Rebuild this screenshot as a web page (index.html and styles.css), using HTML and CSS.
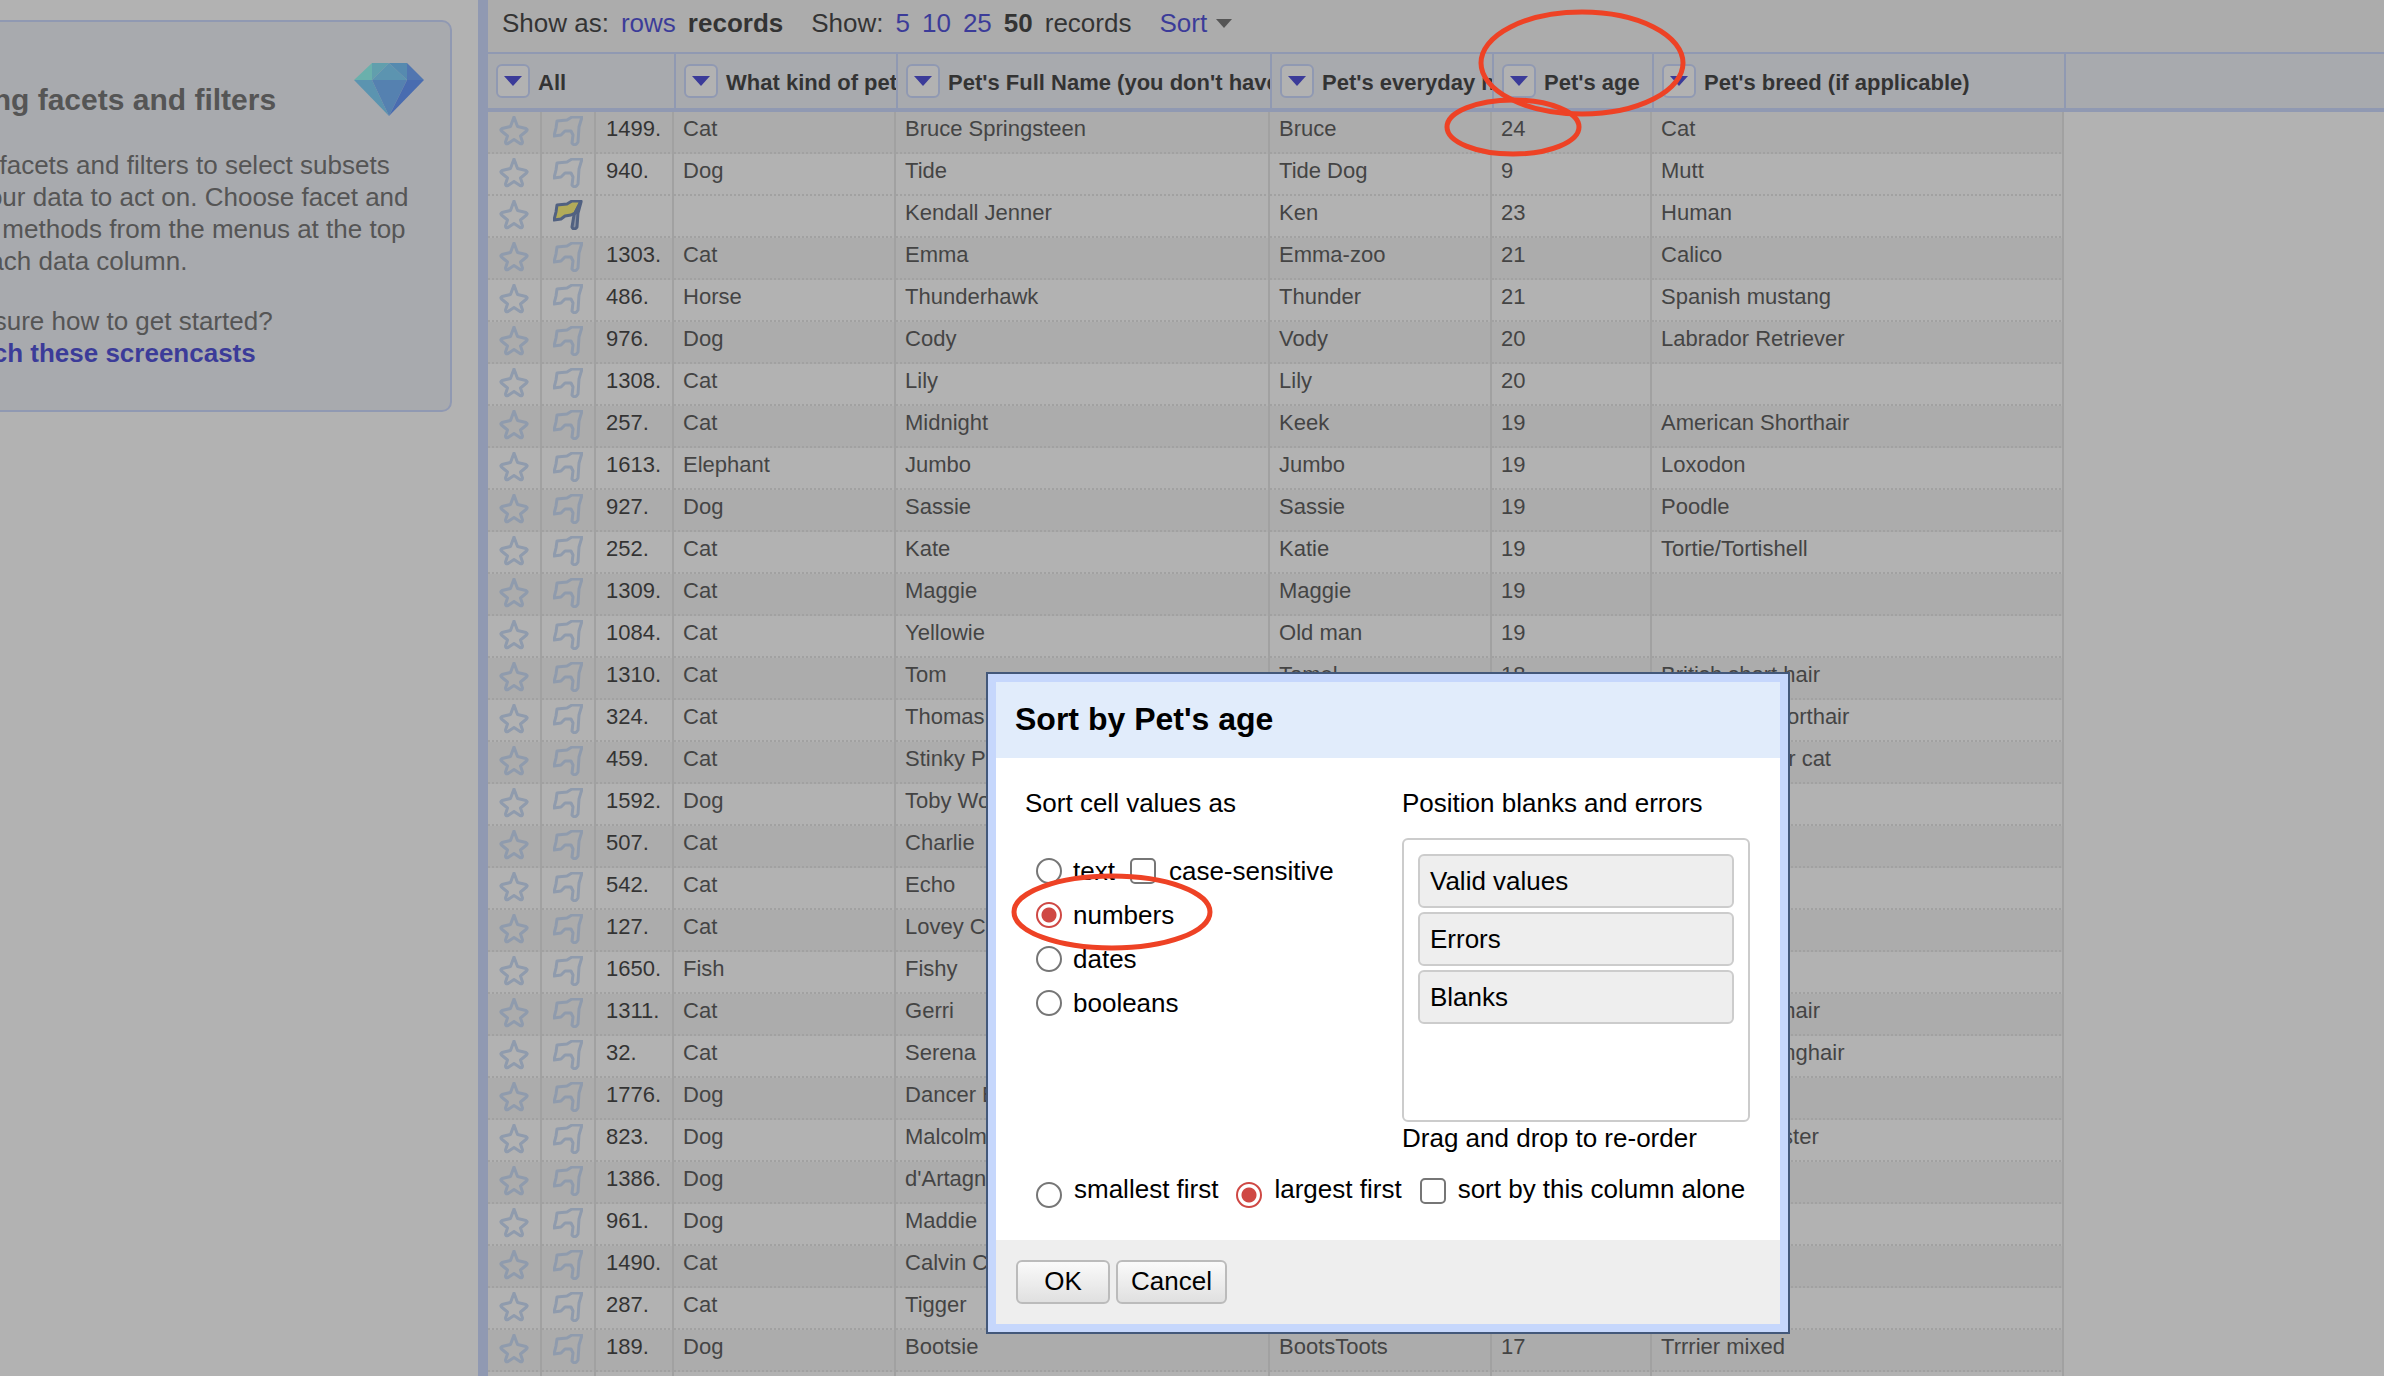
FILE: index.html
```html
<!DOCTYPE html>
<html lang="en">
<head>
<meta charset="utf-8">
<title>Pets - sort records</title>
<link rel="stylesheet" href="styles.css">
</head>
<body>
<svg class="sprite" aria-hidden="true">
  <symbol id="star" viewBox="0 0 30 30"><path d="M15 1L18.500 10.500L27 12.500Q29 13.500 27.500 15L21.500 20L23.500 26Q23.500 28.500 21 27.500L15 23.500L9 27.500Q6.500 28.500 6.500 26L8.500 20L2.500 15Q1 13.500 3 12.500L11.500 10.500Z"/></symbol>
  <symbol id="flag" viewBox="0 0 30 30"><path d="M4 5L14 4L19 1H29L26 11L25 26Q22 31 19 27L20 19L18 15H12L8 19L1 20L3 12Z"/></symbol>
  <symbol id="flag-on" viewBox="0 0 30 30"><path class="cloth" d="M4 5L14 4L19 1H28L22 13L18 15L12 16L8 19L1 20L3 12Z"/><path class="pole" d="M28 2L25 13L24 27Q21 31 19 27L21 15Z"/></symbol>
  <symbol id="down" viewBox="0 0 18 10"><path d="M0 0H18L9 10Z"/></symbol>
</svg>

<div class="app">
  <aside class="facets">
    <div class="help">
      <div class="help-head">
        <h2>Using facets and filters</h2>
        <svg class="gem" viewBox="0 0 70 54" aria-hidden="true">
          <path fill="#6efbf2" d="M18 1L0 18H18Z"/>
          <path fill="#5cd8f4" d="M18 1H35L18 18Z"/>
          <path fill="#52c2fa" d="M35 1L53 18H18Z"/>
          <path fill="#46aef8" d="M35 1H53V18Z"/>
          <path fill="#3c86fa" d="M53 1L70 18H53Z"/>
          <path fill="#50c2fa" d="M0 18H18L35 54Z"/>
          <path fill="#449cfa" d="M18 18H53L35 54Z"/>
          <path fill="#2c72fa" d="M53 18H70L35 54Z"/>
        </svg>
      </div>
      <p>Use facets and filters to select subsets of your data to act on. Choose facet and filter methods from the menus at the top of each data column.</p>
      <p>Not sure how to get started?<br><a href="#">Watch these screencasts</a></p>
    </div>
  </aside>

  <main class="view">
    <nav class="toolbar">
      <div class="group"><span>Show as:</span><a href="#">rows</a><b>records</b></div>
      <div class="group"><span>Show:</span><a href="#">5</a><a href="#">10</a><a href="#">25</a><b>50</b><span>records</span></div>
      <a class="sort" href="#">Sort <svg aria-hidden="true"><use href="#down"/></svg></a>
    </nav>

    <table class="grid">
      <colgroup><col class="c-mark"><col class="c-mark"><col class="c-index"><col class="c-kind"><col class="c-name"><col class="c-nick"><col class="c-age"><col class="c-breed"><col></colgroup>
      <thead>
        <tr>
          <th colspan="3"><div><button aria-label="All menu"><svg><use href="#down"/></svg></button>All</div></th>
          <th><div><button aria-label="Column menu"><svg><use href="#down"/></svg></button>What kind of pet is this?</div></th>
          <th><div><button aria-label="Column menu"><svg><use href="#down"/></svg></button>Pet's Full Name (you don't have to include it)</div></th>
          <th><div><button aria-label="Column menu"><svg><use href="#down"/></svg></button>Pet's everyday name</div></th>
          <th><div><button aria-label="Column menu"><svg><use href="#down"/></svg></button>Pet's age</div></th>
          <th><div><button aria-label="Column menu"><svg><use href="#down"/></svg></button>Pet's breed (if applicable)</div></th>
          <th></th>
        </tr>
      </thead>
      <tbody>
        <tr><td><svg><use href="#star"/></svg></td><td><svg><use href="#flag"/></svg></td><td>1499.</td><td>Cat</td><td>Bruce Springsteen</td><td>Bruce</td><td>24</td><td>Cat</td></tr>
        <tr><td><svg><use href="#star"/></svg></td><td><svg><use href="#flag"/></svg></td><td>940.</td><td>Dog</td><td>Tide</td><td>Tide Dog</td><td>9</td><td>Mutt</td></tr>
        <tr><td><svg><use href="#star"/></svg></td><td><svg class="on"><use href="#flag-on"/></svg></td><td></td><td></td><td>Kendall Jenner</td><td>Ken</td><td>23</td><td>Human</td></tr>
        <tr><td><svg><use href="#star"/></svg></td><td><svg><use href="#flag"/></svg></td><td>1303.</td><td>Cat</td><td>Emma</td><td>Emma-zoo</td><td>21</td><td>Calico</td></tr>
        <tr><td><svg><use href="#star"/></svg></td><td><svg><use href="#flag"/></svg></td><td>486.</td><td>Horse</td><td>Thunderhawk</td><td>Thunder</td><td>21</td><td>Spanish mustang</td></tr>
        <tr><td><svg><use href="#star"/></svg></td><td><svg><use href="#flag"/></svg></td><td>976.</td><td>Dog</td><td>Cody</td><td>Vody</td><td>20</td><td>Labrador Retriever</td></tr>
        <tr><td><svg><use href="#star"/></svg></td><td><svg><use href="#flag"/></svg></td><td>1308.</td><td>Cat</td><td>Lily</td><td>Lily</td><td>20</td><td></td></tr>
        <tr><td><svg><use href="#star"/></svg></td><td><svg><use href="#flag"/></svg></td><td>257.</td><td>Cat</td><td>Midnight</td><td>Keek</td><td>19</td><td>American Shorthair</td></tr>
        <tr><td><svg><use href="#star"/></svg></td><td><svg><use href="#flag"/></svg></td><td>1613.</td><td>Elephant</td><td>Jumbo</td><td>Jumbo</td><td>19</td><td>Loxodon</td></tr>
        <tr><td><svg><use href="#star"/></svg></td><td><svg><use href="#flag"/></svg></td><td>927.</td><td>Dog</td><td>Sassie</td><td>Sassie</td><td>19</td><td>Poodle</td></tr>
        <tr><td><svg><use href="#star"/></svg></td><td><svg><use href="#flag"/></svg></td><td>252.</td><td>Cat</td><td>Kate</td><td>Katie</td><td>19</td><td>Tortie/Tortishell</td></tr>
        <tr><td><svg><use href="#star"/></svg></td><td><svg><use href="#flag"/></svg></td><td>1309.</td><td>Cat</td><td>Maggie</td><td>Maggie</td><td>19</td><td></td></tr>
        <tr><td><svg><use href="#star"/></svg></td><td><svg><use href="#flag"/></svg></td><td>1084.</td><td>Cat</td><td>Yellowie</td><td>Old man</td><td>19</td><td></td></tr>
        <tr><td><svg><use href="#star"/></svg></td><td><svg><use href="#flag"/></svg></td><td>1310.</td><td>Cat</td><td>Tom</td><td>Tomel</td><td>18</td><td>British short hair</td></tr>
        <tr><td><svg><use href="#star"/></svg></td><td><svg><use href="#flag"/></svg></td><td>324.</td><td>Cat</td><td>Thomas</td><td></td><td></td><td>American Shorthair</td></tr>
        <tr><td><svg><use href="#star"/></svg></td><td><svg><use href="#flag"/></svg></td><td>459.</td><td>Cat</td><td>Stinky Pete</td><td></td><td></td><td>Domestic hair cat</td></tr>
        <tr><td><svg><use href="#star"/></svg></td><td><svg><use href="#flag"/></svg></td><td>1592.</td><td>Dog</td><td>Toby Wong</td><td></td><td></td><td></td></tr>
        <tr><td><svg><use href="#star"/></svg></td><td><svg><use href="#flag"/></svg></td><td>507.</td><td>Cat</td><td>Charlie</td><td></td><td></td><td></td></tr>
        <tr><td><svg><use href="#star"/></svg></td><td><svg><use href="#flag"/></svg></td><td>542.</td><td>Cat</td><td>Echo</td><td></td><td></td><td></td></tr>
        <tr><td><svg><use href="#star"/></svg></td><td><svg><use href="#flag"/></svg></td><td>127.</td><td>Cat</td><td>Lovey Cat</td><td></td><td></td><td></td></tr>
        <tr><td><svg><use href="#star"/></svg></td><td><svg><use href="#flag"/></svg></td><td>1650.</td><td>Fish</td><td>Fishy</td><td></td><td></td><td></td></tr>
        <tr><td><svg><use href="#star"/></svg></td><td><svg><use href="#flag"/></svg></td><td>1311.</td><td>Cat</td><td>Gerri</td><td></td><td></td><td>British short hair</td></tr>
        <tr><td><svg><use href="#star"/></svg></td><td><svg><use href="#flag"/></svg></td><td>32.</td><td>Cat</td><td>Serena</td><td></td><td></td><td>Domestic Longhair</td></tr>
        <tr><td><svg><use href="#star"/></svg></td><td><svg><use href="#flag"/></svg></td><td>1776.</td><td>Dog</td><td>Dancer Billy</td><td></td><td></td><td></td></tr>
        <tr><td><svg><use href="#star"/></svg></td><td><svg><use href="#flag"/></svg></td><td>823.</td><td>Dog</td><td>Malcolm</td><td></td><td></td><td>Labrador Buster</td></tr>
        <tr><td><svg><use href="#star"/></svg></td><td><svg><use href="#flag"/></svg></td><td>1386.</td><td>Dog</td><td>d'Artagnan</td><td></td><td></td><td></td></tr>
        <tr><td><svg><use href="#star"/></svg></td><td><svg><use href="#flag"/></svg></td><td>961.</td><td>Dog</td><td>Maddie</td><td></td><td></td><td></td></tr>
        <tr><td><svg><use href="#star"/></svg></td><td><svg><use href="#flag"/></svg></td><td>1490.</td><td>Cat</td><td>Calvin Cat</td><td></td><td></td><td></td></tr>
        <tr><td><svg><use href="#star"/></svg></td><td><svg><use href="#flag"/></svg></td><td>287.</td><td>Cat</td><td>Tigger</td><td></td><td></td><td></td></tr>
        <tr><td><svg><use href="#star"/></svg></td><td><svg><use href="#flag"/></svg></td><td>189.</td><td>Dog</td><td>Bootsie</td><td>BootsToots</td><td>17</td><td>Trrrier mixed</td></tr>
        <tr><td></td><td></td><td></td><td></td><td></td><td></td><td></td><td></td></tr>
      </tbody>
    </table>
  </main>
</div>

<div class="shade"></div>

<form class="dialog" role="dialog" aria-labelledby="dialog-title">
  <header><h1 id="dialog-title">Sort by Pet's age</h1></header>
  <div class="dialog-body">
    <div class="columns">
      <section>
        <h3>Sort cell values as</h3>
        <ul class="options">
          <li><label><input type="radio" name="type">text</label><label class="case"><input type="checkbox">case-sensitive</label></li>
          <li><label><input type="radio" name="type" checked>numbers</label></li>
          <li><label><input type="radio" name="type">dates</label></li>
          <li><label><input type="radio" name="type">booleans</label></li>
        </ul>
      </section>
      <section class="blanks">
        <h3>Position blanks and errors</h3>
        <ul class="order"><li>Valid values</li><li>Errors</li><li>Blanks</li></ul>
        <p>Drag and drop to re-order</p>
      </section>
    </div>
    <div class="direction">
      <label><input type="radio" name="direction">smallest first</label>
      <label><input type="radio" name="direction" checked>largest first</label>
      <label><input type="checkbox">sort by this column alone</label>
    </div>
  </div>
  <footer><button type="button">OK</button><button type="button">Cancel</button></footer>
</form>

<svg class="annotations" aria-hidden="true">
  <ellipse cx="1582" cy="63" rx="101" ry="51"/>
  <ellipse cx="1513" cy="127" rx="66" ry="27"/>
  <ellipse cx="1112" cy="912" rx="98" ry="36"/>
</svg>
</body>
</html>
```
FILE: styles.css
```css
* { box-sizing: border-box; }

body {
  margin: 0;
  height: 100vh;
  overflow: hidden;
  background: #fff;
  color: #000;
  font: 26px/32px "Liberation Sans", Arial, sans-serif;
}

h1, h2, h3, p, ul { margin: 0; padding: 0; }
ul { list-style: none; }
a { color: #11c; text-decoration: none; }
button { font: inherit; color: inherit; }
.sprite { display: none; }

.app { display: flex; }

/* The side panel is scrolled partly out of view. */
.facets {
  flex: none;
  width: 571px;
  margin-left: -93px;
  padding: 20px 26px 0 0;
}

.help {
  padding: 40px 26px 41px 37px;
  border: 2px solid #bcf;
  border-radius: 10px;
  background: #ebeef6;
  color: #444;
}

.help-head { display: flex; justify-content: space-between; align-items: flex-start; margin-bottom: 32px; }
.help h2 { margin-top: 21px; font-size: 30px; line-height: 34px; }
.help p { margin-right: 12px; }
.help p + p { margin-top: 28px; }
.help a { font-weight: bold; }
.gem { width: 70px; height: 54px; }

.view { flex: 1; min-width: 0; border-left: 10px solid #bcf; }

.toolbar { display: flex; gap: 28px; padding: 7px 14px 13px; background: #f2f2f2; }
.group { display: flex; gap: 12px; }
.sort { display: flex; align-items: center; gap: 9px; }
.sort svg { width: 16px; height: 9px; fill: #444; }

.grid {
  width: 100%;
  table-layout: fixed;
  border-collapse: separate;
  border-spacing: 0;
  font-size: 22px;
  line-height: 26px;
}

.c-mark { width: 54px; }
.c-index { width: 78px; }
.c-kind { width: 222px; }
.c-name { width: 374px; }
.c-nick { width: 222px; }
.c-age { width: 160px; }
.c-breed { width: 412px; }

th {
  height: 60px;
  padding: 0 0 0 8px;
  border: solid #bcf;
  border-width: 2px 0 4px 2px;
  background: #ebeef6;
  line-height: 30px;
  text-align: left;
}
th:first-child { border-left: 0; }
th div { display: flex; align-items: flex-end; gap: 8px; overflow: hidden; white-space: nowrap; }
th button {
  display: flex;
  flex: none;
  align-items: center;
  justify-content: center;
  width: 34px;
  height: 34px;
  padding: 0;
  border: 2px solid #bcf;
  border-radius: 6px;
  background: #fff;
}
th svg { width: 18px; height: 10px; fill: #11c; }

td {
  height: 42px;
  padding: 4px 8px 10px 9px;
  border: solid #ddd;
  border-width: 0 2px 2px 0;
  border-bottom-style: dotted;
  color: #222;
  white-space: nowrap;
}
td:nth-child(-n+2) { padding: 4px 0 0; vertical-align: top; }
td:nth-child(3) { padding-left: 10px; padding-right: 0; color: #000; }
tbody tr:first-child td, tbody tr:nth-child(2n+4) td { background: #f2f2f2; }

td svg { display: block; width: 30px; height: 30px; margin: 0 auto; fill: none; stroke: #b8d0f4; stroke-width: 3; stroke-linejoin: round; }
td svg.on { stroke: #3c5c9c; }
.cloth { fill: #fff04c; }
.pole { fill: #a8b8d8; }

.shade { position: fixed; inset: 0; background: rgba(102, 102, 102, .5); }

.dialog {
  position: absolute;
  left: 986px;
  top: 672px;
  width: 804px;
  border: 2px solid #43587a;
  outline: 8px solid #c6d7fc;
  outline-offset: -10px;
  padding: 8px;
  background: #fff;
}
.dialog header { padding: 19px 19px 21px; background: #e1ecfb; }
.dialog h1 { font-size: 32px; line-height: 36px; }
.dialog h3 { font-size: 26px; font-weight: normal; }
.dialog-body { padding: 29px 30px 32px 29px; }
.dialog footer { display: flex; gap: 6px; padding: 20px; background: #eee; }
.dialog footer button {
  min-width: 94px;
  height: 44px;
  padding: 0 13px 2px;
  border: 2px solid #bbb;
  border-radius: 6px;
  background: linear-gradient(#fafafa, #e0e0e0);
}

.columns { display: flex; justify-content: space-between; }
.options { margin-top: 30px; padding-left: 11px; }
.options li { display: flex; align-items: center; gap: 15px; height: 44px; }
.dialog label { display: flex; align-items: center; gap: 11px; white-space: nowrap; }
.dialog .case { gap: 13px; }

.dialog input {
  flex: none;
  width: 26px;
  height: 26px;
  margin: 0;
  appearance: none;
  border: 2px solid #767676;
  border-radius: 5px;
  background: #fff;
}
.dialog input[type=radio] { border-radius: 50%; }
.dialog input[type=radio]:checked { border-color: #cf4844; background: radial-gradient(circle, #cf4844 7px, #fff 8px); }

.blanks { width: 348px; }
.order {
  display: flex;
  flex-direction: column;
  gap: 4px;
  min-height: 284px;
  margin-top: 19px;
  padding: 14px;
  border: 2px solid #ccc;
  border-radius: 6px;
}
.order li { padding: 9px 10px; border: 2px solid #ccc; border-radius: 6px; background: #eee; }

.direction { display: flex; gap: 18px; margin-top: 19px; padding-left: 11px; }
.direction label { align-items: flex-start; gap: 12px; }
.direction input { margin-top: 9px; }
.direction input[type=checkbox] { margin-top: 5px; }

.annotations { position: absolute; left: 0; top: 0; width: 100%; height: 100%; fill: none; stroke: #ee4225; stroke-width: 5; pointer-events: none; }
```
